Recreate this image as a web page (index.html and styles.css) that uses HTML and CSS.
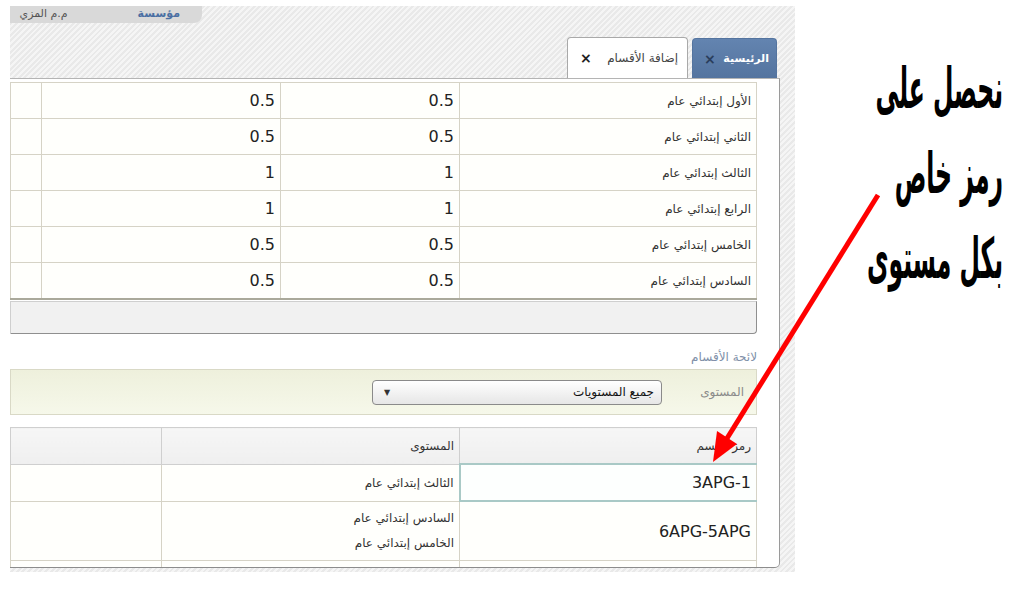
FILE: index.html
```html
<!DOCTYPE html>
<html lang="ar">
<head>
    <meta charset="UTF-8">
    <title>إضافة الأقسام</title>
    <link rel="stylesheet" href="styles.css">
</head>
<body>
    <div class="page">
        <div class="shot">
            <div class="topbar">
                <span class="org">مؤسسة</span>
                <span class="user">م.م المزي</span>
            </div>
            <div class="tabs">
                <div class="tab active"><span>الرئيسية</span><span class="x">×</span></div>
                <div class="tab"><span>إضافة الأقسام</span><span class="x">×</span></div>
            </div>
            <div class="panel">
                <table class="grid levels">
                    <tr><td class="c1">الأول إبتدائي عام</td><td class="c2 num">0.5</td><td class="c3 num">0.5</td><td class="c4"></td></tr>
                    <tr><td class="c1">الثاني إبتدائي عام</td><td class="c2 num">0.5</td><td class="c3 num">0.5</td><td class="c4"></td></tr>
                    <tr><td class="c1">الثالث إبتدائي عام</td><td class="c2 num">1</td><td class="c3 num">1</td><td class="c4"></td></tr>
                    <tr><td class="c1">الرابع إبتدائي عام</td><td class="c2 num">1</td><td class="c3 num">1</td><td class="c4"></td></tr>
                    <tr><td class="c1">الخامس إبتدائي عام</td><td class="c2 num">0.5</td><td class="c3 num">0.5</td><td class="c4"></td></tr>
                    <tr><td class="c1">السادس إبتدائي عام</td><td class="c2 num">0.5</td><td class="c3 num">0.5</td><td class="c4"></td></tr>
                </table>
                <div class="bar"></div>
                <div class="caption">لائحة الأقسام</div>
                <div class="filter">
                    <span class="filter-label">المستوى</span>
                    <div class="select"><span>جميع المستويات</span><span class="arrow">▼</span></div>
                </div>
                <table class="grid sections">
                    <tr class="head"><td class="s1">رمز القسم</td><td class="s2">المستوى</td><td class="s3"></td></tr>
                    <tr><td class="s1 num picked">3APG-1</td><td class="s2">الثالث إبتدائي عام</td><td class="s3"></td></tr>
                    <tr class="tall"><td class="s1 num">6APG-5APG</td><td class="s2">السادس إبتدائي عام<br>الخامس إبتدائي عام</td><td class="s3"></td></tr>
                    <tr><td class="s1"></td><td class="s2"></td><td class="s3"></td></tr>
                </table>
            </div>
        </div>
        <div class="note">
            <p>نحصل على</p>
            <p>رمز خاص</p>
            <p>بكل مستوى</p>
        </div>
    </div>
    <svg class="pointer" width="1029" height="593" viewBox="0 0 1029 593">
        <line x1="878" y1="195" x2="726" y2="440" stroke="#f00" stroke-width="5"/>
        <polygon points="713,462 737,444 717,431" fill="#f00"/>
    </svg>
</body>
</html>
```

FILE: styles.css
```css
body {
    margin: 0;
    background-color: #fff;
    font-family: "DejaVu Sans", sans-serif;
    position: relative;
    width: 1029px;
    height: 593px;
    overflow: hidden;
}
.page {
    display: flex;
}
.shot {
    flex: none;
    width: 770px;
    height: 562px;
    margin: 6px 0 0 10px;
    padding: 0 15px 4px 0;
    display: flex;
    flex-direction: column;
    background: repeating-linear-gradient(135deg, #e9e9e9 0 2px, #f5f5f5 2px 4px);
}
.topbar {
    width: 170px;
    height: 17px;
    padding-right: 22px;
    background-color: #d9d9d9;
    border-bottom-right-radius: 8px;
    direction: rtl;
    display: flex;
    gap: 70px;
    overflow: hidden;
    font-size: 11px;
    line-height: 13px;
    white-space: nowrap;
}
.topbar span {
    margin-top: 1px;
}
.topbar .org {
    color: #4a6fa3;
    font-weight: bold;
}
.topbar .user {
    color: #555;
}
.tabs {
    margin-top: 14px;
    height: 41px;
    padding-right: 3px;
    direction: rtl;
    display: flex;
    align-items: flex-end;
    gap: 4px;
}
.tab {
    box-sizing: border-box;
    height: 41px;
    width: 121px;
    padding: 0 9px 0 12px;
    display: flex;
    align-items: center;
    justify-content: space-between;
    background-color: #fff;
    border: 1px solid #a9a9a9;
    border-bottom: none;
    border-radius: 4px 4px 0 0;
    font-size: 12px;
    color: #444;
}
.tab.active {
    width: 85px;
    height: 40px;
    padding: 0 7px 0 11px;
    background: linear-gradient(#6384b0, #54749f);
    border-color: #54749f;
    color: #fff;
    font-weight: bold;
    font-size: 11px;
}
.tab .x {
    font-weight: bold;
    font-size: 14px;
    color: #222;
}
.tab.active .x {
    color: #2a3e5c;
}
.panel {
    flex: 1;
    overflow: hidden;
    background-color: #fff;
    border-top: 1px solid #b4b4b4;
    border-right: 1px solid #9a9a9a;
    border-bottom: 1px solid #8c8c8c;
    border-bottom-right-radius: 5px;
    padding: 3px 22px 0 0;
    direction: rtl;
}
.grid {
    border-collapse: collapse;
    width: 747px;
    table-layout: fixed;
    font-size: 12px;
    color: #333;
}
.grid td {
    border: 1px solid #d6d3c6;
    border-right: none;
    padding: 0 5px;
    text-align: right;
    background-color: #fffffc;
}
.grid td:first-child {
    border-right: 1px solid #d6d3c6;
}
.grid .num {
    font-size: 16px;
    color: #222;
}
.levels td {
    height: 35px;
}
.levels tr:last-child td {
    border-bottom: 2px solid #aaa99a;
}
.levels .c1 { width: 286px; }
.levels .c2 { width: 168px; }
.levels .c3 { width: 228px; }
.bar {
    width: 745px;
    height: 31px;
    margin-top: 1px;
    background-color: #f1f1f1;
    border: 1px solid #cfcfcf;
    border-right-color: #8f8f8f;
    border-bottom-color: #8f8f8f;
    border-bottom-right-radius: 4px;
}
.caption {
    margin-top: 16px;
    font-size: 12px;
    line-height: 14px;
    color: #8090a8;
}
.filter {
    margin-top: 5px;
    width: 745px;
    height: 44px;
    display: flex;
    align-items: center;
    background: linear-gradient(#eef0dc, #f6f8ea);
    border: 1px solid #d9d9c6;
}
.filter-label {
    width: 56px;
    margin: 0 12px 0 26px;
    font-size: 12px;
    color: #8a8a8a;
}
.select {
    box-sizing: border-box;
    width: 290px;
    height: 25px;
    display: flex;
    align-items: center;
    justify-content: space-between;
    padding: 0 7px 0 11px;
    border: 1px solid #8a8a8a;
    border-radius: 4px;
    background: linear-gradient(#fff, #e6e6e6);
    font-size: 12px;
    color: #111;
}
.select .arrow {
    font-size: 8px;
    color: #333;
}
.sections {
    margin-top: 12px;
}
.sections td {
    height: 35px;
}
.sections .s1 { width: 286px; }
.sections .s2 { width: 287px; }
.sections .head td {
    background: linear-gradient(#f6f6f6, #efefef);
    border-color: #cfcfcf;
}
.sections .picked {
    border: 2px solid #a9c9c6;
    background-color: #fdfffe;
}
.sections .tall td {
    height: 58px;
    line-height: 25px;
}
.note {
    flex: 1;
    min-width: 0;
    direction: rtl;
    padding: 46px 26px 0 0;
}
.note p {
    margin: 0;
    font-family: "DejaVu Sans", sans-serif;
    font-weight: bold;
    font-size: 56px;
    line-height: 85px;
    color: #000;
    white-space: nowrap;
    transform: scaleX(0.42);
    transform-origin: right center;
}
.pointer {
    position: absolute;
    top: 0;
    left: 0;
    pointer-events: none;
}
```
